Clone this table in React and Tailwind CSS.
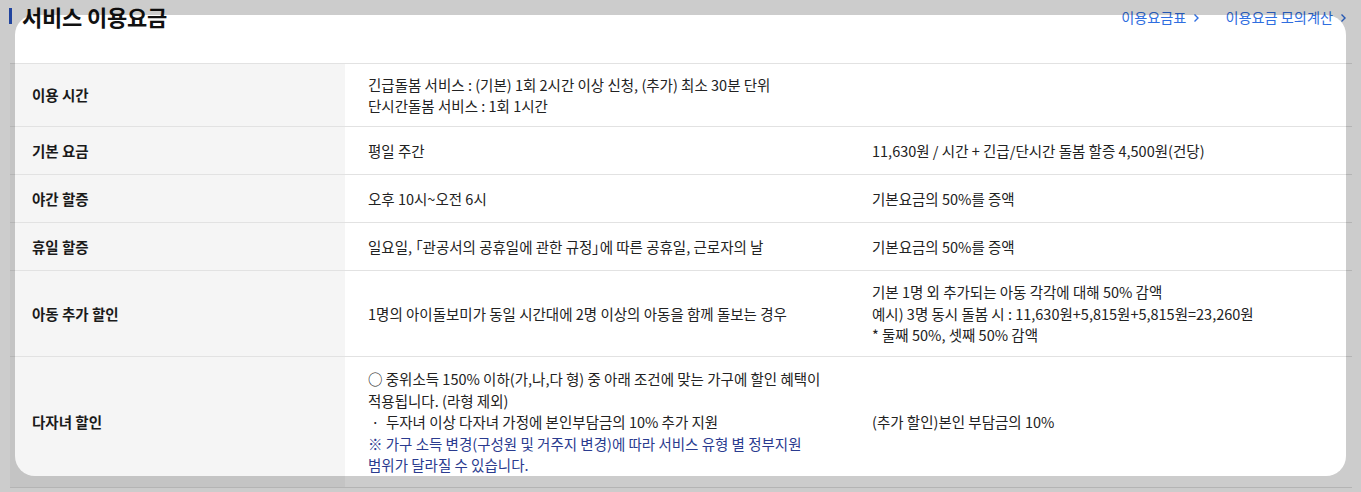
const rows = [
  {
    label: '이용 시간',
    h: 'h-[63px]',
    span: true,
    left: ['긴급돌봄 서비스 : (기본) 1회 2시간 이상 신청, (추가) 최소 30분 단위', '단시간돌봄 서비스 : 1회 1시간'],
  },
  { label: '기본 요금', h: 'h-[48px]', left: ['평일 주간'], right: ['11,630원 / 시간 + 긴급/단시간 돌봄 할증 4,500원(건당)'] },
  { label: '야간 할증', h: 'h-[48px]', left: ['오후 10시~오전 6시'], right: ['기본요금의 50%를 증액'] },
  {
    label: '휴일 할증',
    h: 'h-[48px]',
    left: [<>일요일, <span className="[font-feature-settings:'palt']">「</span>관공서의 공휴일에 관한 규정<span className="[font-feature-settings:'palt']">」</span>에 따른 공휴일, 근로자의 날</>],
    right: ['기본요금의 50%를 증액'],
  },
  {
    label: '아동 추가 할인',
    h: 'h-[86px]',
    left: ['1명의 아이돌보미가 동일 시간대에 2명 이상의 아동을 함께 돌보는 경우'],
    right: ['기본 1명 외 추가되는 아동 각각에 대해 50% 감액', '예시) 3명 동시 돌봄 시 : 11,630원+5,815원+5,815원=23,260원', '* 둘째 50%, 셋째 50% 감액'],
  },
]

function ChevronRight() {
  return (
    <svg width="8" height="10" viewBox="0 0 8 10" className="ml-[6px]" fill="none">
      <path d="M2.5 1.5 L6 5 L2.5 8.5" stroke="#2f6ee0" strokeWidth="1.4" />
    </svg>
  )
}

export default function App() {
  return (
    <div className="relative min-h-[492px] bg-white overflow-hidden font-['Noto_Sans_CJK_KR','Noto_Sans',sans-serif] text-[#222]">
      {/* Header */}
      <div className="flex justify-between h-[63px] pl-[9px] pr-[14px]">
        <div className="flex items-start">
          <span className="mt-[8px] w-[3px] h-[16px] bg-[#2a56c6]" />
          <h2 className="ml-[10px] text-[22px] leading-[33px] font-bold text-[#111] tracking-[-0.2px]">서비스 이용요금</h2>
        </div>
        <div className="flex items-start gap-[25px] mt-[7px] text-[14.2px] leading-[21px] text-[#2f6ee0]">
          <a className="flex items-center">이용요금표<ChevronRight /></a>
          <a className="flex items-center">이용요금 모의계산<ChevronRight /></a>
        </div>
      </div>

      {/* Table */}
      <div className="ml-[10px] w-[1342px] border-t border-[#e2e2e2] text-[14.5px] leading-[21.5px] break-keep">
        {rows.map((r) => (
          <div key={r.label} className={`grid grid-cols-[335px_504px_503px] border-b border-[#e2e2e2] ${r.h}`}>
            <div className="bg-[#f5f5f5] flex items-center pl-[22px] font-bold text-[#1a1a1a]">{r.label}</div>
            <div className={`flex flex-col justify-center pl-[23px] ${r.span ? 'col-span-2' : ''}`}>
              {r.left.map((t, i) => <p key={i}>{t}</p>)}
            </div>
            {!r.span && (
              <div className="flex flex-col justify-center pl-[23px]">
                {r.right.map((t, i) => <p key={i}>{t}</p>)}
              </div>
            )}
          </div>
        ))}
        <div className="grid grid-cols-[335px_504px_503px] border-b border-[#e2e2e2] h-[131px]">
          <div className="bg-[#f5f5f5] flex items-center pl-[22px] font-bold text-[#1a1a1a]">다자녀 할인</div>
          <div className="flex flex-col justify-center pl-[23px] pr-[20px]">
            <p>○ 중위소득 150% 이하(가,나,다 형) 중 아래 조건에 맞는 가구에 할인 혜택이 적용됩니다. (라형 제외)</p>
            <p>&nbsp;·&nbsp; 두자녀 이상 다자녀 가정에 본인부담금의 10% 추가 지원</p>
            <p className="text-[#2a3b8f]">※ 가구 소득 변경(구성원 및 거주지 변경)에 따라 서비스 유형 별 정부지원 범위가 달라질 수 있습니다.</p>
          </div>
          <div className="flex items-center pl-[23px]">(추가 할인)본인 부담금의 10%</div>
        </div>
      </div>

      {/* Spotlight overlay */}
      <div className="pointer-events-none absolute left-[15px] top-[15px] w-[1331px] h-[461px] rounded-[20px] shadow-[0_0_0_3000px_rgba(0,0,0,0.2)]" />
    </div>
  )
}
